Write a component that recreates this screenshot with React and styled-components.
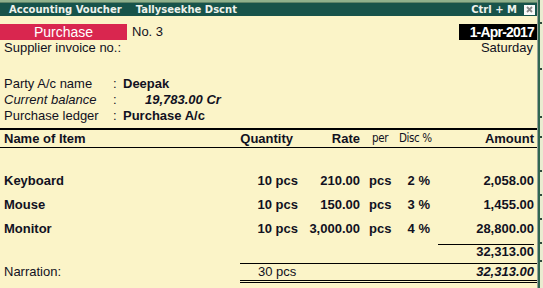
import React from 'react'
import styled, { createGlobalStyle } from 'styled-components'

const GlobalStyle = createGlobalStyle`
	html, body {
		margin: 0;
		padding: 0;
		background: #fbf4c8;
	}
	body {
		font-family: "Liberation Sans", Arial, sans-serif;
		color: #111122;
	}
`

const items = [
	{ name: 'Keyboard', qty: '10 pcs', rate: '210.00', per: 'pcs', disc: '2 %', amount: '2,058.00' },
	{ name: 'Mouse', qty: '10 pcs', rate: '150.00', per: 'pcs', disc: '3 %', amount: '1,455.00' },
	{ name: 'Monitor', qty: '10 pcs', rate: '3,000.00', per: 'pcs', disc: '4 %', amount: '28,800.00' },
]

const ticks = [32, 78, 126, 146, 180, 204, 228, 252, 270]

function App() {
	return (
		<>
			<GlobalStyle />
			<Window>
				<TopStrip />
				<Frame>
					<Content>
						<TitleBar>
							<TitleLeft>
								<span>Accounting Voucher</span>
								<span>Tallyseekhe Dscnt</span>
							</TitleLeft>
							<TitleRight>
								<span>Ctrl + M</span>
								<CloseBox>
									<svg width='7' height='7' viewBox='0 0 7 7'>
										<path d='M1 1L6 6M6 1L1 6' stroke='#8a8a8a' strokeWidth='1.8' />
									</svg>
								</CloseBox>
							</TitleRight>
						</TitleBar>
						<Body>
							<VoucherRow>
								<TypeBadge>Purchase</TypeBadge>
								<VoucherNo>No. 3</VoucherNo>
								<DateBadge>1-Apr-2017</DateBadge>
							</VoucherRow>
							<SubRow>
								<span>Supplier invoice no.:</span>
								<span>Saturday</span>
							</SubRow>
							<PartyBlock>
								<PartyLabel>Party A/c name</PartyLabel>
								<Colon>:</Colon>
								<PartyValue>Deepak</PartyValue>
								<PartyLabel $italic>Current balance</PartyLabel>
								<Colon>:</Colon>
								<Balance>19,783.00 Cr</Balance>
								<PartyLabel>Purchase ledger</PartyLabel>
								<Colon>:</Colon>
								<PartyValue>Purchase A/c</PartyValue>
							</PartyBlock>
							<HeaderRow>
								<Cell $pl={4}>Name of Item</Cell>
								<Cell $align='right' $pr={7}>Quantity</Cell>
								<Cell $align='right'>Rate</Cell>
								<SmallCell $pl={12}>per</SmallCell>
								<SmallCell $pl={3}>Disc %</SmallCell>
								<Cell $align='right' $pr={3}>Amount</Cell>
							</HeaderRow>
							<ItemList>
								{items.map(it => (
									<ItemRow key={it.name}>
										<Cell $pl={4}>{it.name}</Cell>
										<Cell $align='right' $pr={2}>{it.qty}</Cell>
										<Cell $align='right'>{it.rate}</Cell>
										<Cell $pl={9}>{it.per}</Cell>
										<Cell $align='right' $pr={2}>{it.disc}</Cell>
										<Cell $align='right' $pr={3}>{it.amount}</Cell>
									</ItemRow>
								))}
							</ItemList>
							<TotalRow>
								<TotalCell>32,313.00</TotalCell>
							</TotalRow>
							<NarrationRow>
								<NarrationLabel>Narration:</NarrationLabel>
								<NarrationTotals>
									<QtyTotal>30 pcs</QtyTotal>
									<GrandTotal>32,313.00</GrandTotal>
								</NarrationTotals>
							</NarrationRow>
						</Body>
					</Content>
					<Edge>
						{ticks.map(t => (
							<Tick key={t} style={{ top: t }} />
						))}
					</Edge>
				</Frame>
			</Window>
		</>
	)
}

const Window = styled.div`
	width: 543px;
	height: 288px;
	overflow: hidden;
	display: flex;
	flex-direction: column;
	background: #fbf4c8;
`
const TopStrip = styled.div`
	height: 3px;
	background: #8fb08c;
	border-bottom: 1px solid #5f8468;
	box-sizing: border-box;
`
const Frame = styled.div`
	flex: 1;
	display: flex;
`
const Content = styled.div`
	width: 537px;
	display: flex;
	flex-direction: column;
`
const TitleBar = styled.div`
	height: 13px;
	background: #17534a;
	color: #eef2ec;
	font-family: "DejaVu Sans", Verdana, sans-serif;
	font-weight: bold;
	font-size: 10px;
	display: flex;
	align-items: center;
	justify-content: space-between;
	padding: 0 2px 0 9px;
`
const TitleLeft = styled.div`
	display: flex;
	gap: 14px;
`
const TitleRight = styled.div`
	display: flex;
	align-items: center;
	gap: 7px;
`
const CloseBox = styled.div`
	width: 11px;
	height: 10px;
	background: #fafafa;
	display: flex;
	align-items: center;
	justify-content: center;
`
const Body = styled.div`
	display: flex;
	flex-direction: column;
	font-size: 13px;
`
const VoucherRow = styled.div`
	margin-top: 8px;
	height: 16px;
	display: flex;
	align-items: center;
`
const TypeBadge = styled.div`
	width: 127px;
	height: 16px;
	line-height: 16px;
	background: #d9264f;
	color: #fff;
	font-size: 14px;
	text-align: center;
`
const VoucherNo = styled.div`
	margin-left: 5px;
	font-size: 13px;
	line-height: 16px;
`
const DateBadge = styled.div`
	margin-left: auto;
	width: 78px;
	height: 16px;
	line-height: 16px;
	background: #000;
	color: #fff;
	font-weight: bold;
	font-size: 14px;
	letter-spacing: -0.8px;
	text-align: right;
	padding-right: 3px;
	box-sizing: border-box;
`
const SubRow = styled.div`
	height: 16px;
	line-height: 16px;
	display: flex;
	justify-content: space-between;
	padding: 0 4px;
`
const PartyBlock = styled.div`
	margin-top: 20px;
	display: grid;
	grid-template-columns: 109px 10px 1fr;
	grid-auto-rows: 16px;
	line-height: 16px;
	padding-left: 4px;
`
const PartyLabel = styled.div`
	font-style: ${p => (p.$italic ? 'italic' : 'normal')};
`
const Colon = styled.div``
const PartyValue = styled.div`
	font-weight: bold;
`
const Balance = styled.div`
	font-weight: bold;
	font-style: italic;
	padding-left: 22px;
`
const columns = '240px 60px 60px 36px 36px 1fr'

const HeaderRow = styled.div`
	margin-top: 4px;
	display: grid;
	grid-template-columns: ${columns};
	height: 17px;
	line-height: 17px;
	border-top: 2px solid #000;
	border-bottom: 1px solid #000;
	font-weight: bold;
`
const Cell = styled.div`
	text-align: ${p => p.$align || 'left'};
	padding-left: ${p => p.$pl || 0}px;
	padding-right: ${p => p.$pr || 0}px;
	white-space: nowrap;
`
const SmallCell = styled(Cell)`
	font-family: "DejaVu Sans Condensed", "Liberation Sans Narrow", sans-serif;
	font-stretch: condensed;
	font-weight: normal;
	font-size: 11.5px;
	letter-spacing: -0.4px;
`
const ItemList = styled.div`
	margin-top: 21px;
	display: flex;
	flex-direction: column;
`
const ItemRow = styled.div`
	display: grid;
	grid-template-columns: ${columns};
	height: 24px;
	line-height: 24px;
	font-weight: bold;
`
const TotalRow = styled.div`
	margin-top: 3px;
	display: flex;
	justify-content: flex-end;
	padding-right: 3px;
	height: 19px;
`
const TotalCell = styled.div`
	width: 96px;
	border-top: 1px solid #000;
	text-align: right;
	font-weight: bold;
	line-height: 13px;
`
const NarrationRow = styled.div`
	display: grid;
	grid-template-columns: 240px 1fr;
`
const NarrationLabel = styled.div`
	padding-left: 4px;
	padding-top: 1px;
	line-height: 16px;
`
const NarrationTotals = styled.div`
	display: flex;
	justify-content: space-between;
	border-top: 1px solid #000;
	border-bottom: 3px double #000;
	height: 16px;
	line-height: 16px;
	padding: 0 3px 0 18px;
`
const QtyTotal = styled.div``
const GrandTotal = styled.div`
	font-weight: bold;
	font-style: italic;
`
const Edge = styled.div`
	position: relative;
	flex: 1;
	margin-top: -13px;
	border-left: 1px solid #9aa39a;
	background: linear-gradient(to right, #2f6650 0 2px, #e9ecd0 2px);
`
const Tick = styled.div`
	position: absolute;
	left: 2px;
	width: 2px;
	height: 2px;
	background: #2f4a3c;
`

export default App
